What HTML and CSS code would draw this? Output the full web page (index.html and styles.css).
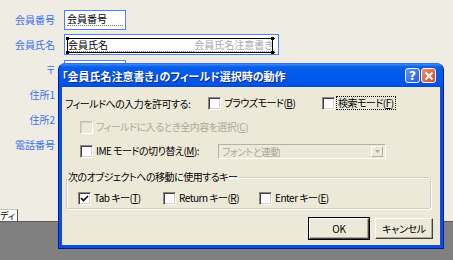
FILE: index.html
```html
<!DOCTYPE html>
<html lang="ja">
<head>
    <meta charset="UTF-8">
    <title>フィールド選択時の動作</title>
    <link rel="stylesheet" href="styles.css">
</head>
<body>
    <div class="screen">
        <div class="form-panel">
            <div class="field-row">
                <span class="field-label">会員番号</span>
                <div class="field field-short"><span class="field-text">会員番号</span></div>
            </div>
            <div class="field-row">
                <span class="field-label">会員氏名</span>
                <div class="field field-wide">
                    <div class="selection">
                        <span class="field-text">会員氏名</span>
                        <span class="field-note">会員氏名注意書き</span>
                        <i class="handle h-tl"></i><i class="handle h-bl"></i>
                        <i class="handle h-tr"></i><i class="handle h-br"></i>
                    </div>
                </div>
            </div>
            <div class="field-row">
                <span class="field-label">〒</span>
                <div class="field field-short"></div>
            </div>
            <div class="field-row"><span class="field-label">住所1</span></div>
            <div class="field-row"><span class="field-label">住所2</span></div>
            <div class="field-row"><span class="field-label">電話番号</span></div>
            <div class="tab-strip"><span class="tab">ディ</span></div>
        </div>

        <div class="dialog">
            <div class="title-bar">
                <span class="title-text">「会員氏名注意書き」のフィールド選択時の動作</span>
                <span class="title-btn btn-help">?</span>
                <span class="title-btn btn-close">
                    <svg width="10" height="10" viewBox="0 0 10 10"><path d="M1.5 1.5 L8.5 8.5 M8.5 1.5 L1.5 8.5" stroke="#fff" stroke-width="2"/></svg>
                </span>
            </div>
            <div class="dialog-body">
                <div class="opt-row row-first">
                    <span class="permit-label">フィールドへの入力を許可する:</span>
                    <label class="check-item browse-item"><span class="box"></span><span class="check-text">ブラウズモード(<u>B</u>)</span></label>
                    <label class="check-item"><span class="box"></span><span class="check-text focused">検索モード(<u>F</u>)</span></label>
                </div>
                <div class="opt-row indent">
                    <label class="check-item disabled"><span class="box"></span><span class="check-text">フィールドに入るとき全内容を選択(<u>C</u>)</span></label>
                </div>
                <div class="opt-row indent">
                    <label class="check-item ime-item"><span class="box"></span><span class="check-text">IME モードの切り替え(<u>M</u>):</span></label>
                    <div class="combo">
                        <span class="combo-text">フォントと連動</span>
                        <span class="combo-btn"><svg width="5" height="3" viewBox="0 0 5 3"><path d="M0 0 H5 L2.5 3 Z" fill="#aca899"/></svg></span>
                    </div>
                </div>
                <fieldset class="group">
                    <legend>次のオブジェクトへの移動に使用するキー</legend>
                    <div class="group-row">
                        <label class="check-item tab-item"><span class="box"><svg width="9" height="9" viewBox="0 0 9 9"><path d="M1 4 L3.5 6.5 L8 2" fill="none" stroke="#000" stroke-width="1.6"/></svg></span><span class="check-text">Tab キー(<u>T</u>)</span></label>
                        <label class="check-item return-item"><span class="box"></span><span class="check-text">Return キー(<u>R</u>)</span></label>
                        <label class="check-item"><span class="box"></span><span class="check-text">Enter キー(<u>E</u>)</span></label>
                    </div>
                </fieldset>
                <div class="button-row">
                    <button class="btn btn-default">OK</button>
                    <button class="btn">キャンセル</button>
                </div>
            </div>
        </div>
    </div>
</body>
</html>
```

FILE: styles.css
```css
body {
    margin: 0;
    padding: 0;
    font-family: "Noto Sans CJK JP", sans-serif;
    font-size: 10px;
    font-feature-settings: "palt";
}

.screen {
    position: relative;
    width: 453px;
    height: 260px;
    background: #808080;
    overflow: hidden;
}

.form-panel {
    height: 222px;
    box-sizing: border-box;
    padding-top: 7px;
    background: #efede3;
    border-bottom: 1px solid #5a5a5a;
    display: flex;
    flex-direction: column;
}

.field-row {
    height: 25px;
    display: flex;
    align-items: center;
    gap: 9px;
}

.field-label {
    width: 55px;
    text-align: right;
    color: #3a6ef6;
}

.field {
    height: 20px;
    box-sizing: border-box;
    border: 1px solid #4f7ff4;
    background: #fff;
    position: relative;
}

.field-short {
    width: 62px;
    padding: 2px 2px 0;
}

.field-wide {
    width: 215px;
    height: 21px;
    padding: 3px 3px 0 2px;
}

.field-text {
    display: block;
    height: 12px;
    line-height: 12px;
    color: #000;
    border-bottom: 1px dotted #777;
}

.selection {
    position: relative;
    height: 13px;
    border-top: 1px solid #000;
    border-bottom: 1px solid #000;
    display: flex;
    justify-content: space-between;
}

.selection .field-text {
    flex: 1;
    padding-left: 1px;
}

.field-note {
    height: 12px;
    line-height: 12px;
    color: #a8a8a8;
    padding-right: 2px;
    border-bottom: 1px dotted #aaa;
}

.handle {
    position: absolute;
    width: 3px;
    height: 3px;
    background: #000;
}

.h-tl { left: -1px; top: -2px; }
.h-bl { left: -1px; bottom: -2px; }
.h-tr { right: 1px; top: -2px; }
.h-br { right: 1px; bottom: -2px; }

.h-tl::after, .h-tr::after {
    content: "";
    position: absolute;
    left: 1px;
    top: 3px;
    width: 1px;
    height: 12px;
    background: #000;
}

.tab-strip {
    margin-top: auto;
    height: 12px;
    display: flex;
}

.tab {
    width: 18px;
    box-sizing: border-box;
    background: #fbfbf8;
    border-top: 1px solid #c8c6bc;
    border-right: 1px solid #555;
    line-height: 11px;
    font-size: 9px;
    white-space: nowrap;
}

/* dialog */

.dialog {
    position: absolute;
    left: 58px;
    top: 63px;
    width: 386px;
    height: 186px;
    box-sizing: border-box;
    padding: 0 3px 3px;
    background: #0b4fe0;
    border: 1px solid #0019a8;
    border-top-color: #2f6ff0;
    border-radius: 7px 7px 0 0;
    display: flex;
    flex-direction: column;
}

.title-bar {
    height: 23px;
    display: flex;
    align-items: center;
    padding-left: 3px;
    margin: 0 -3px;
    padding-right: 7px;
    border-radius: 6px 6px 0 0;
    background: linear-gradient(#3d8cf6 0, #0a5fe8 3px, #0058ee 12px, #0055e6 20px, #0049d6 23px);
}

.title-text {
    flex: 1;
    color: #fff;
    font-weight: bold;
    font-size: 11px;
    text-shadow: 1px 1px 0 #0a2a8c;
}

.title-btn {
    width: 15px;
    height: 15px;
    box-sizing: border-box;
    border: 1px solid #fff;
    border-radius: 3px;
    margin-left: 1px;
    display: flex;
    align-items: center;
    justify-content: center;
    color: #fff;
    font-weight: bold;
    font-family: "DejaVu Sans", sans-serif;
    font-size: 12px;
}

.btn-help {
    background: linear-gradient(135deg, #5e95f8, #1f5de0);
}

.btn-close {
    background: linear-gradient(135deg, #f09070, #d6461c);
}

.dialog-body {
    flex: 1;
    background: #ece9d8;
    padding: 0 0 0 3px;
    letter-spacing: -0.5px;
}

.opt-row {
    height: 16px;
    display: flex;
    align-items: center;
    margin-top: 7px;
}

.row-first {
    margin-top: 8px;
}

.indent {
    padding-left: 15px;
    margin-top: 8px;
}

.permit-label {
    width: 143px;
}

.check-item {
    display: flex;
    align-items: center;
}

.browse-item {
    width: 114px;
}

.box {
    width: 13px;
    height: 13px;
    box-sizing: border-box;
    background: #fff;
    border: 1px solid;
    border-color: #8a8a8a #fff #fff #8a8a8a;
    box-shadow: inset 1px 1px 0 #404040, inset -1px -1px 0 #d8d5c8;
    display: flex;
    align-items: center;
    justify-content: center;
    margin-right: 1px;
}

.check-text {
    padding: 1px 2px;
    line-height: 12px;
}

.focused {
    outline: 1px dotted #000;
    outline-offset: -1px;
}

.disabled {
    color: #aca899;
}

.disabled .box {
    background: #ece9d8;
    border-color: #c4c1b2 #fff #fff #c4c1b2;
    box-shadow: inset 1px 1px 0 #d4d1c4;
}

.ime-item {
    width: 138px;
}

.combo {
    width: 168px;
    height: 15px;
    box-sizing: border-box;
    border: 1px solid;
    border-color: #b5b2a5 #fff #fff #b5b2a5;
    background: #ece9d8;
    display: flex;
    align-items: center;
}

.combo-text {
    flex: 1;
    color: #aca899;
    padding-left: 3px;
}

.combo-btn {
    width: 12px;
    height: 11px;
    box-sizing: border-box;
    margin-right: 2px;
    border: 1px solid;
    border-color: #fff #b5b2a5 #b5b2a5 #fff;
    display: flex;
    align-items: center;
    justify-content: center;
}

.group {
    margin: 12px 9px 0 1px;
    height: 38px;
    box-sizing: border-box;
    padding: 0 0 0 11px;
    border: 1px solid #d0cebf;
    border-radius: 2px;
    box-shadow: inset 1px 1px 0 #fff, 1px 1px 0 #fff;
}

.group legend {
    padding: 0 1px;
    margin-left: -11px;
    line-height: 12px;
}

.group-row {
    display: flex;
    align-items: center;
    margin-top: 8px;
}

.tab-item {
    width: 85px;
}

.return-item {
    width: 96px;
}

.button-row {
    display: flex;
    justify-content: flex-end;
    gap: 6px;
    margin-top: 9px;
    padding-right: 7px;
}

.btn {
    width: 58px;
    height: 21px;
    padding: 0;
    font-family: "Noto Sans CJK JP", sans-serif;
    font-size: 10px;
    font-feature-settings: "palt";
    letter-spacing: -0.3px;
    color: #000;
    background: #ece9d8;
    border: 1px solid;
    border-color: #fff #404040 #404040 #fff;
    box-shadow: inset -1px -1px 0 #aca899;
}

.btn-default {
    width: 60px;
    outline: 1px solid #000;
    outline-offset: 0;
}
```
